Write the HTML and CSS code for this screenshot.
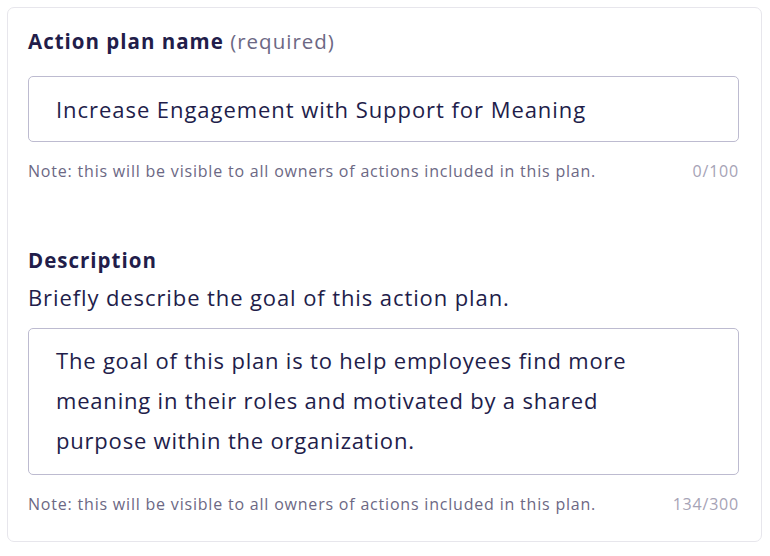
FILE: index.html
```html
<!DOCTYPE html>
<html>
<head>
<meta charset="utf-8">
<link rel="stylesheet" href="styles.css">
</head>
<body>
<div class="card">
  <div class="field">
    <div class="label">Action plan name <span class="req">(required)</span></div>
    <div class="input">Increase Engagement with Support for Meaning</div>
    <div class="meta"><span>Note: this will be visible to all owners of actions included in this plan.</span><span class="count">0/100</span></div>
  </div>
  <div class="field field2">
    <div class="label">Description</div>
    <div class="help">Briefly describe the goal of this action plan.</div>
    <div class="textarea">The goal of this plan is to help employees find more<br>meaning in their roles and motivated by a shared<br>purpose within the organization.</div>
    <div class="meta"><span>Note: this will be visible to all owners of actions included in this plan.</span><span class="count">134/300</span></div>
  </div>
</div>
</body>
</html>
```

FILE: styles.css
```css
html, body { margin: 0; padding: 0; background: #fff; }
body {
  font-family: "Open Sans", "Noto Sans", sans-serif;
  color: #221d4a;
  padding: 7px 8px 0 7px;
  width: 770px;
  box-sizing: border-box;
}
.card {
  border: 1px solid #e7e6ec;
  border-radius: 7px;
  padding: 19px 22px 22px 20px;
  height: 535px;
  box-sizing: border-box;
}
.label {
  font-size: 20.5px;
  font-weight: 700;
  line-height: 28px;
  letter-spacing: 1px;
}
.req { font-weight: 400; color: #6c6884; letter-spacing: 1px; }
.input {
  margin-top: 21px;
  border: 1px solid #bdbbd0;
  border-radius: 5px;
  height: 66px;
  box-sizing: border-box;
  padding: 0 27px;
  display: flex;
  align-items: center;
  font-size: 22px;
  letter-spacing: 0.95px;
}
.meta {
  margin-top: 19px;
  display: flex;
  justify-content: space-between;
  font-size: 16px;
  color: #6c6884;
  line-height: 20px;
  letter-spacing: 0.8px;
}
.count { color: #a6a3b6; }
.field2 { margin-top: 65px; }
.help { font-size: 22px; line-height: 28px; margin-top: 9px; letter-spacing: 0.9px; }
.textarea {
  margin-top: 17px;
  border: 1px solid #bdbbd0;
  border-radius: 5px;
  height: 147px;
  box-sizing: border-box;
  padding: 11px 27px;
  font-size: 22px;
  line-height: 40px;
  letter-spacing: 0.8px;
}
```
